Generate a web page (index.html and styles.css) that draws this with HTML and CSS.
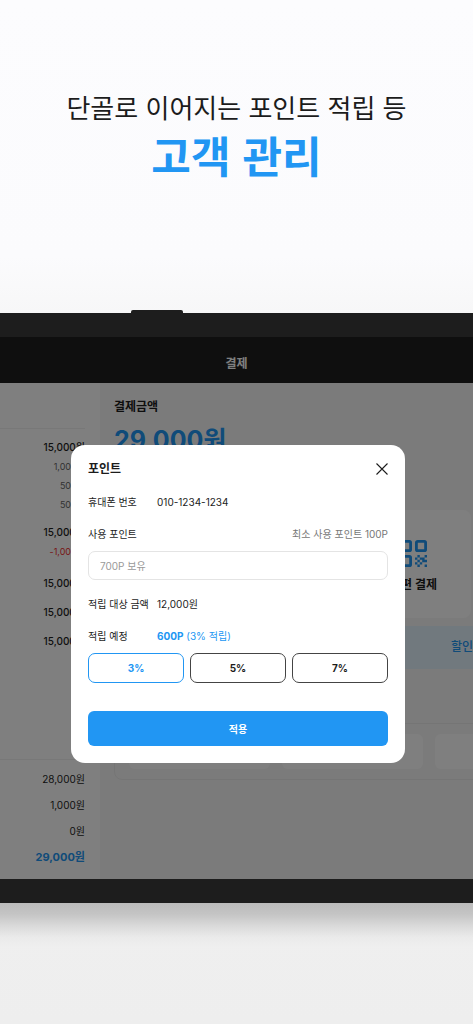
FILE: index.html
```html
<!DOCTYPE html>
<html lang="ko">
<head>
<meta charset="utf-8">
<meta name="viewport" content="width=device-width, initial-scale=1">
<title>고객 관리</title>
<link rel="stylesheet" href="styles.css">
</head>
<body>
<header class="hero">
  <p class="hero-lead">단골로 이어지는 포인트 적립 등</p>
  <h1 class="hero-title">고객 관리</h1>
</header>
<main class="device">
  <div class="device-button"></div>
  <div class="screen">
    <div class="topbar"><h2 class="topbar-title">결제</h2></div>
    <div class="content">
      <aside class="order">
        <ul class="items">
          <li class="item">15,000원</li>
          <li class="option">1,000원</li>
          <li class="option">500원</li>
          <li class="option">500원</li>
          <li class="item">15,000원</li>
          <li class="option minus">-1,000원</li>
          <li class="item">15,000원</li>
          <li class="item">15,000원</li>
          <li class="item">15,000원</li>
        </ul>
        <ul class="totals">
          <li>28,000원</li>
          <li>1,000원</li>
          <li>0원</li>
          <li class="grand">29,000원</li>
        </ul>
      </aside>
      <section class="payment">
        <h3 class="payment-label">결제금액</h3>
        <p class="payment-amount">29,000원</p>
        <div class="methods">
          <button class="method" type="button">
            <svg class="qr" viewBox="0 0 27 27" aria-hidden="true">
              <g fill="none" stroke="currentColor" stroke-width="2.8">
                <rect x="1.4" y="1.4" width="9.2" height="9.2" rx="1.2"/>
                <rect x="16.4" y="1.4" width="9.2" height="9.2" rx="1.2"/>
                <rect x="1.4" y="16.4" width="9.2" height="9.2" rx="1.2"/>
              </g>
              <path fill="currentColor" d="M17.4 15h2.4v2.4h-2.4zM24.6 15H27v2.4h-2.4zM15 17.4h2.4v2.4H15zM19.8 17.4h2.4v2.4h-2.4zM22.2 17.4h2.4v2.4h-2.4zM17.4 19.8h2.4v2.4h-2.4zM22.2 19.8h2.4v2.4h-2.4zM15 22.2h2.4v2.4H15zM19.8 22.2h2.4v2.4h-2.4zM24.6 19.8H27v2.4h-2.4zM17.4 24.6h2.4V27h-2.4zM24.6 24.6H27V27h-2.4z"/>
            </svg>
            <span>간편 결제</span>
          </button>
        </div>
        <div class="discount">할인</div>
        <div class="slots">
          <div class="slot"></div>
          <div class="slot"></div>
          <div class="slot"></div>
        </div>
      </section>
    </div>
    <div class="scrim">
      <form class="dialog" role="dialog" aria-labelledby="dialog-title">
        <div class="dialog-head">
          <h2 class="dialog-title" id="dialog-title">포인트</h2>
          <button class="close" type="button" aria-label="닫기">
            <svg viewBox="0 0 12 12" aria-hidden="true"><path d="M.5.5l11 11M11.5.5l-11 11" fill="none" stroke="currentColor" stroke-width="1.1"/></svg>
          </button>
        </div>
        <div class="row"><span class="term">휴대폰 번호</span><span>010-1234-1234</span></div>
        <div class="row row-split"><label for="points">사용 포인트</label><span class="hint">최소 사용 포인트 100P</span></div>
        <input class="points" id="points" type="text" placeholder="700P 보유">
        <div class="row"><span class="term">적립 대상 금액</span><span>12,000원</span></div>
        <div class="row row-rates"><span class="term">적립 예정</span><span class="earn"><b>600P</b> (3% 적립)</span></div>
        <div class="rates">
          <button class="rate selected" type="button">3%</button>
          <button class="rate" type="button">5%</button>
          <button class="rate" type="button">7%</button>
        </div>
        <button class="apply" type="submit">적용</button>
      </form>
    </div>
  </div>
</main>
</body>
</html>
```
FILE: styles.css
```css
* { box-sizing: border-box; margin: 0; padding: 0; }

body {
  min-height: 100vh;
  overflow-x: hidden;
  background: linear-gradient(#fcfcfe 0%, #fbfbfd 25%, #f6f6f6 32%, #efefef 90%, #eeeeee 100%);
  color: #1c1c1c;
  font-family: Inter, "Noto Sans CJK KR", sans-serif;
  font-size: 10px;
  line-height: 16px;
}

button, input { font: inherit; color: inherit; }
button { cursor: pointer; }
ul { list-style: none; }

.hero {
  padding: 87px 16px 131px;
  text-align: center;
  font-family: "Noto Sans CJK KR", sans-serif;
}
.hero-lead { font-size: 26px; line-height: 40px; }
.hero-title { font-size: 43px; line-height: 55px; font-weight: 700; color: #2196f3; }

.device {
  position: relative;
  padding: 24px 0;
  background: #1d1d1d;
}
.device::after {
  content: "";
  position: absolute;
  top: 100%;
  left: 0;
  right: 0;
  height: 44px;
  background: linear-gradient(rgba(0, 0, 0, 0.22), rgba(0, 0, 0, 0.18) 25%, rgba(0, 0, 0, 0.09) 52%, rgba(0, 0, 0, 0.02) 78%, rgba(0, 0, 0, 0));
}
.device-button {
  position: absolute;
  top: -3px;
  left: 131px;
  width: 52px;
  height: 3px;
  border-radius: 2px 2px 0 0;
  background: #1d1d1d;
}
.screen { position: relative; overflow: hidden; }

.topbar {
  height: 46px;
  padding-top: 18px;
  background: #1e1e1e;
  text-align: center;
}
.topbar-title { font-size: 12px; line-height: 18px; font-weight: 700; color: #fff; }

.content {
  display: grid;
  grid-template-columns: 100px minmax(0, 1fr);
  min-height: 496px;
}

.order {
  display: flex;
  flex-direction: column;
  justify-content: space-between;
  padding-top: 45px;
  background: #fff;
  text-align: right;
}
.items { margin-right: 15px; padding-top: 10px; border-top: 1px solid #f0f0f0; }
.item { line-height: 17px; font-weight: 500; margin-bottom: 12px; }
.item:has(+ .option) { margin-bottom: 2px; }
.option { font-size: 9px; line-height: 17px; margin-bottom: 2px; color: #666; }
.option:has(+ .item) { margin-bottom: 11px; }
.option.minus { color: #f03030; }
.option.minus:has(+ .item) { margin-bottom: 15px; }
.totals {
  display: grid;
  gap: 10px;
  padding: 11px 15px 14px 0;
  border-top: 1px solid #f0f0f0;
}
.totals .grand { font-size: 11px; font-weight: 700; color: #2196f3; }

.payment {
  overflow: hidden;
  padding: 15px 0 0 14px;
  background: #f7f7f7;
}
.payment-label { font-size: 12px; line-height: 18px; font-weight: 700; }
.payment-amount { margin-top: 8px; font-size: 25px; line-height: 32px; font-weight: 700; color: #2196f3; }
.methods { display: grid; grid-template-columns: repeat(3, 115px); gap: 6px; margin-top: 54px; }
.method {
  grid-column: 3;
  display: flex;
  flex-direction: column;
  align-items: center;
  gap: 9px;
  height: 108px;
  padding-top: 30px;
  border: 0;
  border-radius: 8px;
  background: #fff;
  font-size: 12px;
  line-height: 18px;
  font-weight: 700;
}
.qr { width: 27px; height: 27px; color: #2196f3; }
.discount {
  margin-top: 8px;
  padding: 12px 0 13px;
  background: #e3f2fd;
  color: #2196f3;
  font-size: 12px;
  line-height: 18px;
  font-weight: 500;
  text-align: right;
}
.slots {
  display: grid;
  grid-template-columns: repeat(3, 141px);
  gap: 12px;
  width: 480px;
  margin-top: 54px;
  padding: 10px 14px;
  border: 1px solid #ebebeb;
  border-radius: 8px;
}
.slot { height: 35px; border-radius: 6px; background: #fff; }

.scrim {
  position: absolute;
  inset: 0;
  padding: 108px 68px 0 71px;
  background: rgba(0, 0, 0, 0.5);
}
.dialog {
  display: flex;
  flex-direction: column;
  max-width: 334px;
  margin: 0 auto;
  padding: 15px 17px 17px;
  border-radius: 14px;
  background: #fff;
}
.dialog-head { display: flex; align-items: center; justify-content: space-between; margin-bottom: 16px; }
.dialog-title { font-size: 12px; line-height: 18px; font-weight: 700; }
.close { display: flex; border: 0; background: none; }
.close svg { width: 12px; height: 12px; }
.row { display: flex; margin-bottom: 16px; }
.row-split { justify-content: space-between; margin-bottom: 9px; }
.row-rates { margin-bottom: 9px; }
.term { width: 69px; }
.hint { color: #777; }
.points {
  width: 100%;
  height: 29px;
  margin-bottom: 16px;
  padding: 0 11px;
  border: 1px solid #e4e4e4;
  border-radius: 7px;
  background: #fff;
}
.points::placeholder { color: #999; opacity: 1; }
.earn { color: #2196f3; }
.earn b { font-weight: 700; }
.rates { display: grid; grid-template-columns: repeat(3, 1fr); gap: 6px; }
.rate {
  height: 30px;
  border: 1px solid #444;
  border-radius: 7px;
  background: #fff;
  font-weight: 700;
}
.rate.selected { border-color: #2196f3; color: #2196f3; }
.apply {
  height: 35px;
  margin-top: 28px;
  border: 0;
  border-radius: 6px;
  background: #2196f3;
  color: #fff;
  font-weight: 700;
}
```
